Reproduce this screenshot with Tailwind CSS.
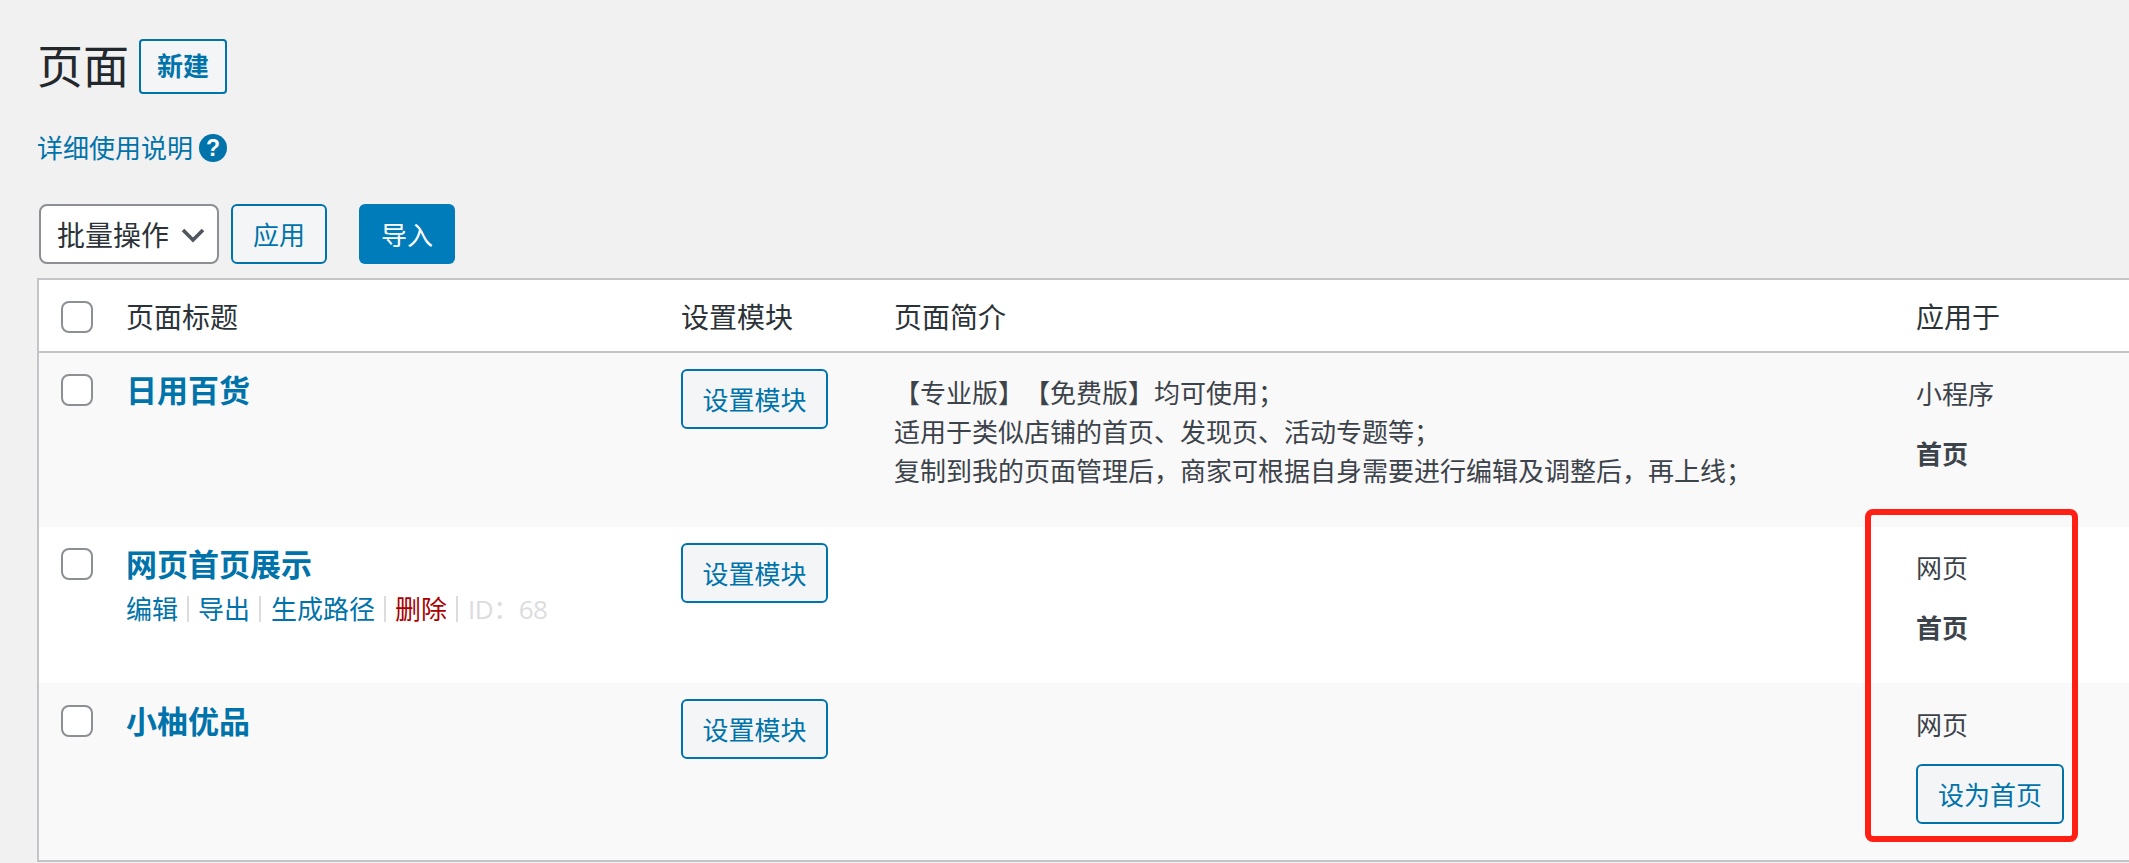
<!DOCTYPE html>
<html lang="zh-CN">
<head>
    <meta charset="UTF-8">
    <meta name="viewport" content="width=device-width, initial-scale=1.0">
    <title>页面</title>
    <script src="https://cdn.jsdelivr.net/npm/@tailwindcss/browser@4"></script>
</head>
<body class="bg-[#f1f1f1] text-[#3c434a] text-[26px] [text-spacing-trim:space-all] font-['Open_Sans','Noto_Sans_CJK_SC',sans-serif] overflow-hidden">
    <div class="relative h-[863px] w-[2129px] overflow-hidden">
        <div class="pl-[37px] pt-[39px]">
            <div class="flex items-center gap-[10px] h-[55px]">
                <h1 class="text-[46px] leading-[55px] -mt-[2px] font-normal text-[#23282d]">页面</h1>
                <a class="flex items-center justify-center w-[88px] h-[55px] border-2 border-[#0073aa] rounded-[4px] bg-[#f3f5f6] text-[#0073aa] font-bold">新建</a>
            </div>

            <div class="flex items-center gap-[6px] h-[40px] mt-[34px] text-[#0073aa]">
                <a>详细使用说明</a>
                <span class="flex items-center justify-center w-[28px] h-[28px] rounded-full bg-[#0073aa] text-white text-[23px] font-bold font-['Liberation_Sans',sans-serif]">?</span>
            </div>

            <div class="flex items-center h-[60px] mt-[36px] ml-[2px]">
                <div class="flex items-center w-[180px] h-[60px] pl-[16px] pt-[2px] border-2 border-[#8c8f94] rounded-[8px] bg-white text-[28px] text-[#2c3338]">
                    批量操作
                    <svg class="ml-[12px]" width="24" height="15" viewBox="0 0 24 15" fill="none" stroke="#50575e" stroke-width="3.6"><path d="M2 2l10 10L22 2"/></svg>
                </div>
                <button class="w-[96px] h-[60px] ml-[12px] pt-[2px] border-2 border-[#0073aa] rounded-[6px] bg-[#f3f5f6] text-[#0073aa]">应用</button>
                <button class="w-[96px] h-[60px] ml-[32px] pt-[2px] rounded-[6px] bg-[#007cba] text-white">导入</button>
            </div>

            <div class="mt-[14px] w-[2200px] border-y-2 border-l-2 border-[#c3c4c7]">
                <div class="grid grid-cols-[87px_555px_213px_1022px_1fr] items-center h-[71px] pt-[2px] bg-white text-[28px] text-[#2c3338]">
                    <div class="pl-[22px] flex"><input type="checkbox" class="appearance-none w-[32px] h-[32px] border-2 border-[#8c8f94] rounded-[8px] bg-white"></div>
                    <div>页面标题</div>
                    <div>设置模块</div>
                    <div>页面简介</div>
                    <div>应用于</div>
                </div>

                <div class="border-t-2 border-[#c3c4c7] grid grid-cols-[87px_555px_213px_1022px_1fr] h-[176px] bg-[#f9f9f9]">
                    <div class="pl-[22px] pt-[21px] flex items-start"><input type="checkbox" class="appearance-none w-[32px] h-[32px] border-2 border-[#8c8f94] rounded-[8px] bg-white"></div>
                    <div class="pt-[15px]"><a class="text-[31px] leading-[44px] font-bold text-[#0073aa]">日用百货</a></div>
                    <div class="pt-[16px]"><button class="w-[147px] h-[60px] pt-[2px] border-2 border-[#0073aa] rounded-[6px] bg-[#f3f5f6] text-[#0073aa]">设置模块</button></div>
                    <div class="pt-[21px] leading-[39px]">
                        <p>【专业版】【免费版】均可使用；</p>
                        <p>适用于类似店铺的首页、发现页、活动专题等；</p>
                        <p>复制到我的页面管理后，商家可根据自身需要进行编辑及调整后，再上线；</p>
                    </div>
                    <div class="pt-[21px] leading-[40px]">
                        <p>小程序</p>
                        <p class="mt-[20px] font-bold">首页</p>
                    </div>
                </div>

                <div class="grid grid-cols-[87px_555px_213px_1022px_1fr] h-[156px] bg-white">
                    <div class="pl-[22px] pt-[21px] flex items-start"><input type="checkbox" class="appearance-none w-[32px] h-[32px] border-2 border-[#8c8f94] rounded-[8px] bg-white"></div>
                    <div class="pt-[15px]">
                        <a class="block text-[31px] leading-[44px] font-bold text-[#0073aa]">网页首页展示</a>
                        <div class="flex items-center h-[40px] mt-[3px] text-[#0073aa]">
                            <a>编辑</a><span class="w-[2px] h-[26px] mx-[9px] bg-[#dcdcde]"></span>
                            <a>导出</a><span class="w-[2px] h-[26px] ml-[9px] mr-[10px] bg-[#dcdcde]"></span>
                            <a>生成路径</a><span class="w-[2px] h-[26px] mx-[9px] bg-[#dcdcde]"></span>
                            <a class="text-[#a00]">删除</a><span class="w-[2px] h-[26px] ml-[9px] mr-[10px] bg-[#dcdcde]"></span>
                            <span class="text-[#dcdcde] tracking-[-0.5px]">ID：68</span>
                        </div>
                    </div>
                    <div class="pt-[16px]"><button class="w-[147px] h-[60px] pt-[2px] border-2 border-[#0073aa] rounded-[6px] bg-[#f3f5f6] text-[#0073aa]">设置模块</button></div>
                    <div></div>
                    <div class="pt-[21px] leading-[40px]">
                        <p>网页</p>
                        <p class="mt-[20px] font-bold">首页</p>
                    </div>
                </div>

                <div class="grid grid-cols-[87px_555px_213px_1022px_1fr] h-[177px] bg-[#f9f9f9]">
                    <div class="pl-[22px] pt-[22px] flex items-start"><input type="checkbox" class="appearance-none w-[32px] h-[32px] border-2 border-[#8c8f94] rounded-[8px] bg-white"></div>
                    <div class="pt-[16px]"><a class="text-[31px] leading-[44px] font-bold text-[#0073aa]">小柚优品</a></div>
                    <div class="pt-[16px]"><button class="w-[147px] h-[60px] pt-[2px] border-2 border-[#0073aa] rounded-[6px] bg-[#f3f5f6] text-[#0073aa]">设置模块</button></div>
                    <div></div>
                    <div class="pt-[22px] leading-[40px]">
                        <p>网页</p>
                        <button class="block w-[148px] h-[60px] mt-[19px] pt-[2px] border-2 border-[#0073aa] rounded-[6px] bg-[#f3f5f6] text-[#0073aa]">设为首页</button>
                    </div>
                </div>
            </div>
        </div>

        <div class="absolute left-[1865px] top-[509px] w-[213px] h-[333px] border-[6px] border-[#ff2015] rounded-[8px]"></div>
    </div>
</body>
</html>
